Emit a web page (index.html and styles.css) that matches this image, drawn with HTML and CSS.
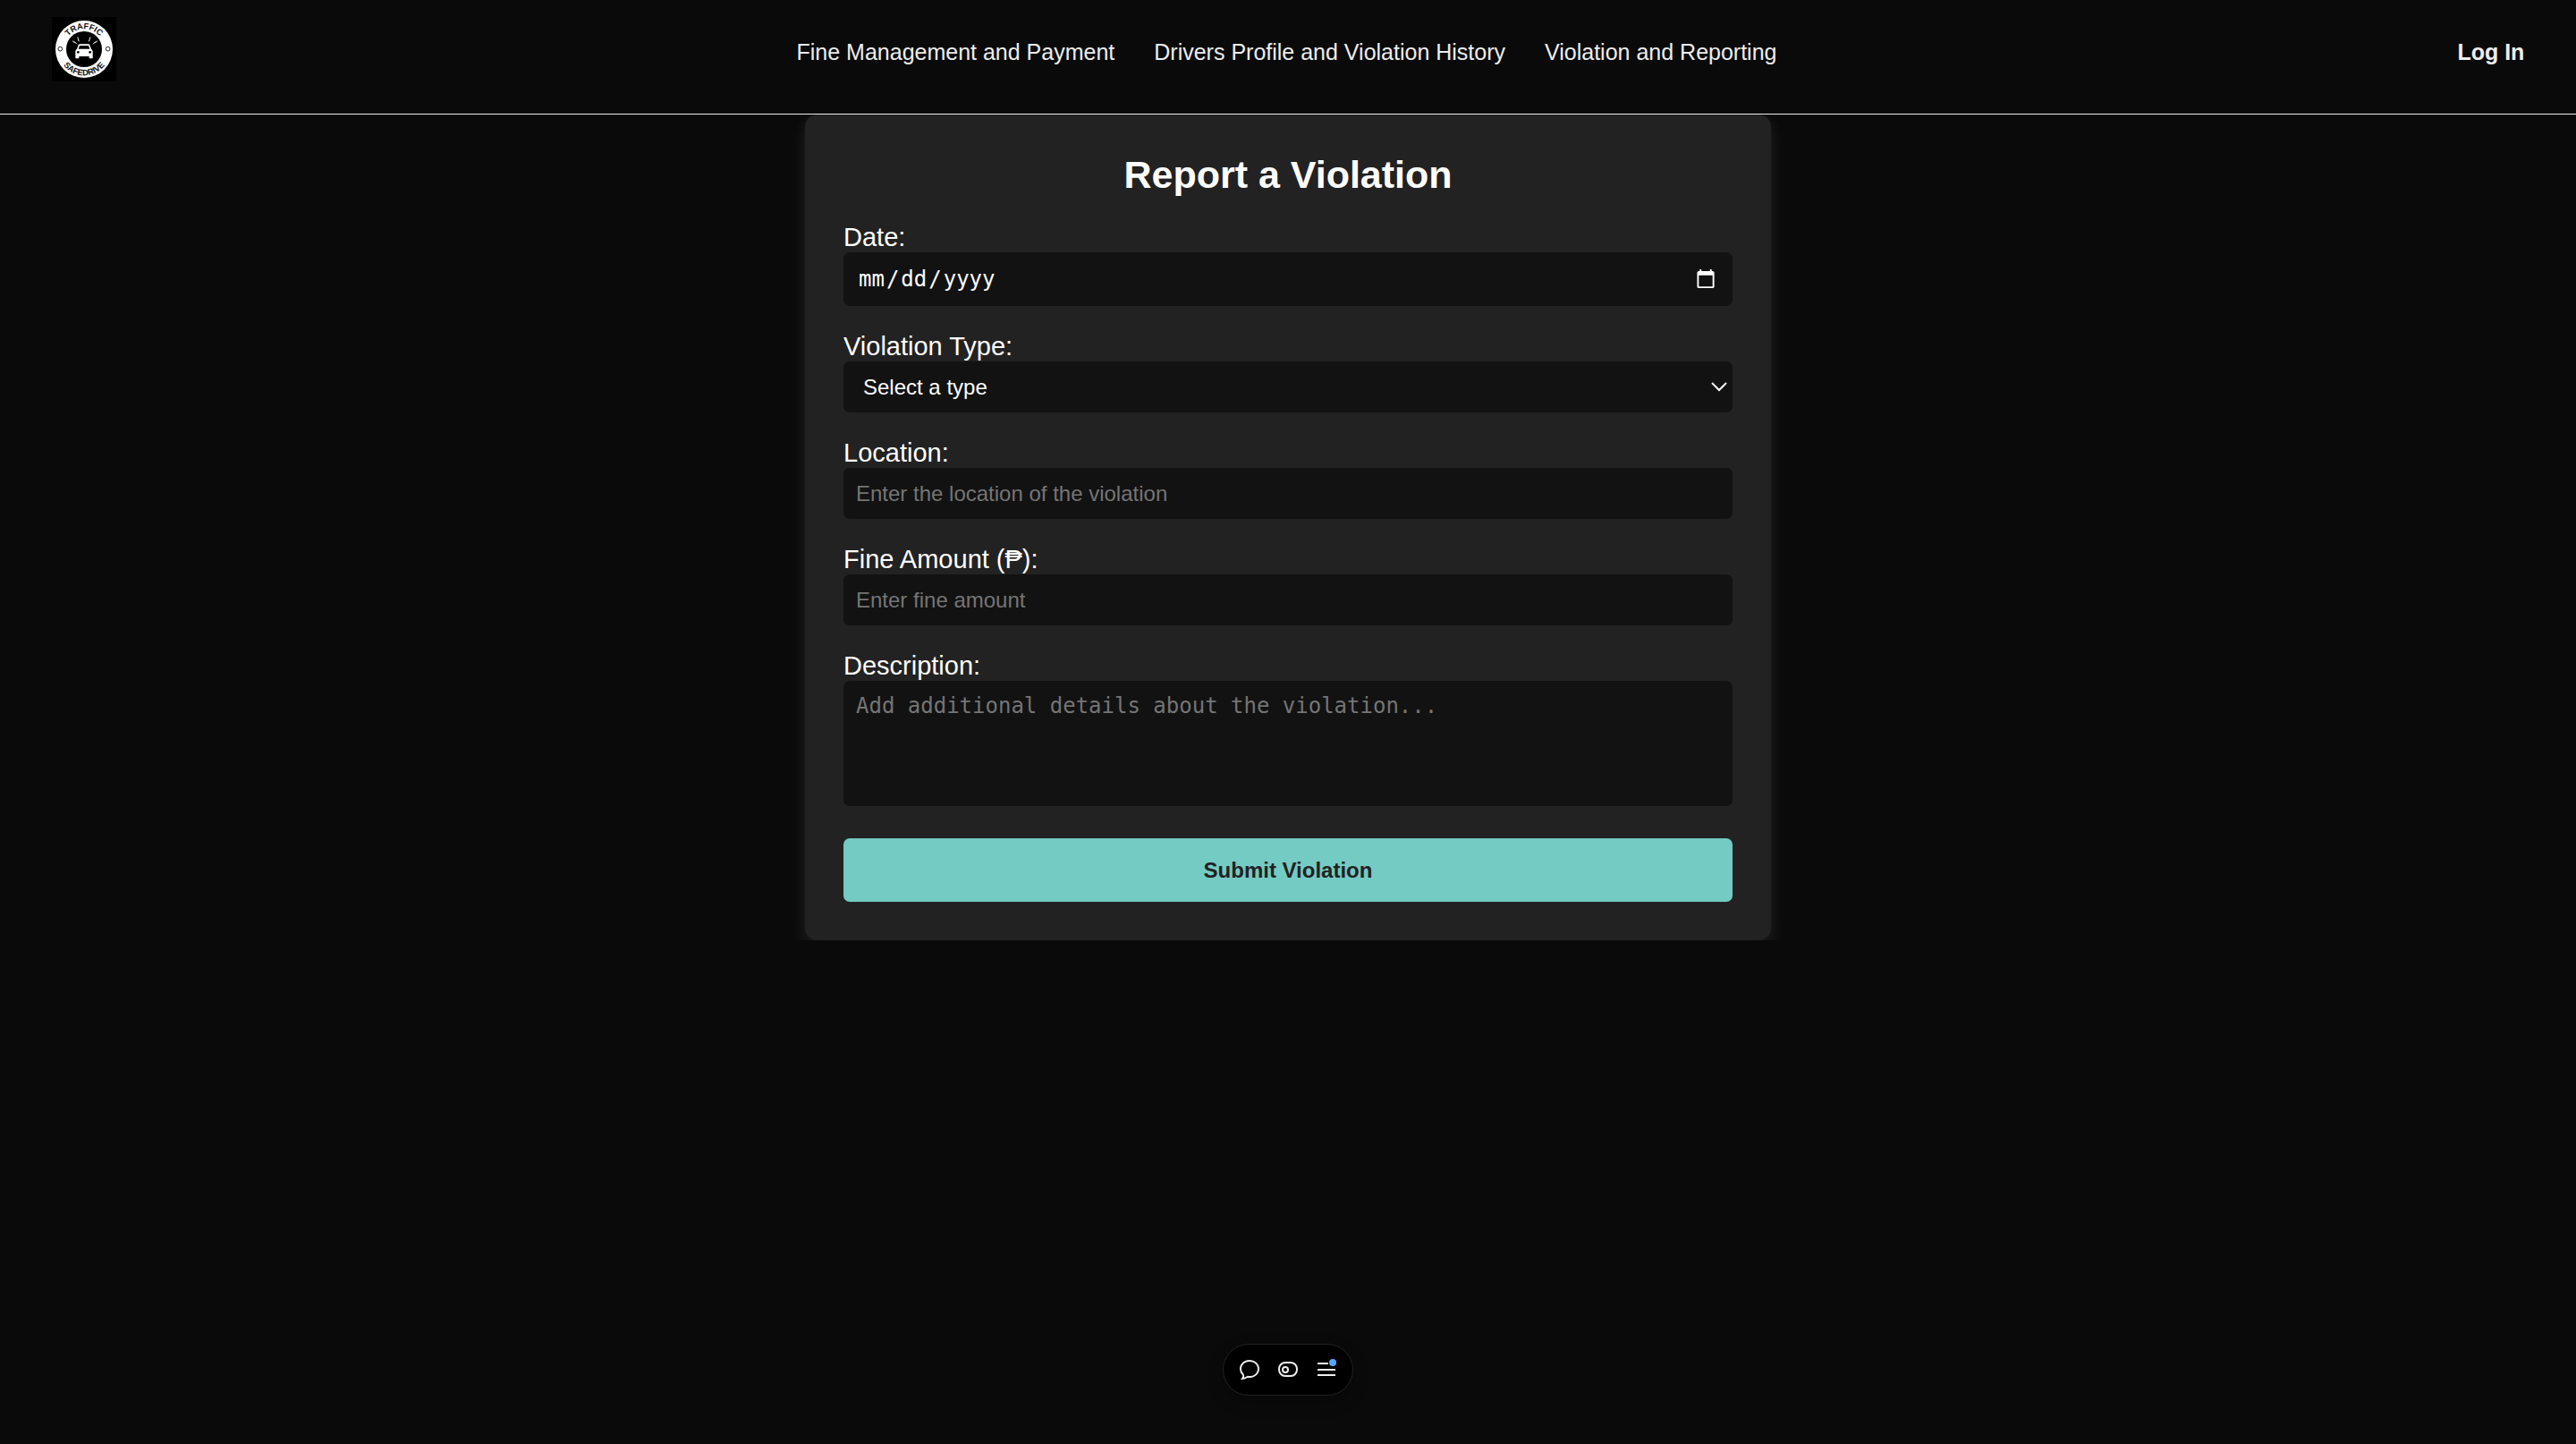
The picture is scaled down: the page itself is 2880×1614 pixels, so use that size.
FILE: index.html
```html
<!DOCTYPE html>
<html lang="en">
<head>
<meta charset="utf-8">
<meta name="viewport" content="width=device-width, initial-scale=1">
<title>Report a Violation</title>
<link rel="stylesheet" href="styles.css">
</head>
<body>
<header class="header">
  <a class="logo" href="#" aria-label="Traffic SafeDrive home">
    <svg viewBox="0 0 216 216" aria-hidden="true">
      <defs>
        <path id="arc-top" d="M40 108 A68 68 0 0 1 176 108"/>
        <path id="arc-bottom" d="M20 108 A88 88 0 0 0 196 108"/>
      </defs>
      <rect width="216" height="216" fill="#000"/>
      <circle cx="108" cy="108" r="96" fill="#fff"/>
      <circle cx="108" cy="108" r="60" fill="#000"/>
      <g class="logo-text">
        <text><textPath href="#arc-top" startOffset="50%">TRAFFIC</textPath></text>
        <text><textPath href="#arc-bottom" startOffset="50%">SAFEDRIVE</textPath></text>
      </g>
      <g fill="none" stroke="#222" stroke-width="3">
        <circle cx="28" cy="107" r="7"/>
        <circle cx="188" cy="107" r="7"/>
      </g>
      <path fill="#fff" d="M89 94 Q90 91 94 91 H122 Q126 91 127 94 L132 107 Q137 110 137 115 V139 H125 V132 H91 V139 H79 V115 Q79 110 84 107 Z"/>
      <path fill="#000" d="M93 96 H123 L127 107 H89 Z"/>
      <circle cx="88" cy="118" r="4" fill="#000"/>
      <circle cx="128" cy="118" r="4" fill="#000"/>
      <path fill="none" stroke="#fff" stroke-width="3" d="M69 80 l7 6 v-3 l8 8 M86 67 l3 7 l-1 1 l3 7 M129 67 l-3 7 l1 1 l-3 7 M153 80 l-7 6 v-3 l-8 8"/>
    </svg>
  </a>
  <nav class="nav">
    <a href="#">Fine Management and Payment</a>
    <a href="#">Drivers Profile and Violation History</a>
    <a href="#">Violation and Reporting</a>
  </nav>
  <a class="login" href="#">Log In</a>
</header>

<main class="main">
  <form class="card">
    <h1 class="title">Report a Violation</h1>
    <div class="field">
      <label for="date">Date:</label>
      <input class="control control-date" id="date" type="date">
    </div>
    <div class="field">
      <label for="type">Violation Type:</label>
      <div class="select">
        <select class="control control-select" id="type"><option>Select a type</option></select>
        <svg class="chevron" viewBox="0 0 18 11" aria-hidden="true"><path d="M1 1 L9 9 L17 1"/></svg>
      </div>
    </div>
    <div class="field">
      <label for="location">Location:</label>
      <input class="control" id="location" type="text" placeholder="Enter the location of the violation">
    </div>
    <div class="field">
      <label for="amount">Fine Amount (₱):</label>
      <input class="control" id="amount" type="number" placeholder="Enter fine amount">
    </div>
    <div class="field">
      <label for="description">Description:</label>
      <textarea class="control control-area" id="description" placeholder="Add additional details about the violation..."></textarea>
    </div>
    <button class="submit" type="submit">Submit Violation</button>
  </form>
</main>

<div class="toolbar" role="toolbar" aria-label="Page tools">
  <button type="button" aria-label="Comment">
    <svg viewBox="0 0 24 24"><path d="M4 22 Q6 19.500 4.500 17 A10 9 0 1 1 13 20 Q11 20 10 19.800 Q7 22 4 22 Z"/></svg>
  </button>
  <button type="button" aria-label="Flags">
    <svg viewBox="0 0 24 24"><rect x="2" y="4" width="20" height="15" rx="7"/><circle cx="9" cy="12" r="3"/></svg>
  </button>
  <button type="button" aria-label="Menu">
    <svg viewBox="0 0 24 24"><path d="M2 5 H14 M2 12 H22 M2 18 H22"/><circle class="dot" cx="19" cy="4" r="4"/></svg>
  </button>
</div>
</body>
</html>
```
FILE: styles.css
```css
* {
  box-sizing: border-box;
}

body {
  margin: 0;
  min-height: 100vh;
  background: #0a0a0a;
  color: #ededed;
  font-family: "Liberation Sans", Arial, sans-serif;
  color-scheme: dark;
}

.header {
  display: flex;
  justify-content: space-between;
  align-items: center;
  padding: 19px 2% 36px;
  border-bottom: 1px solid #ededed;
}

.header a {
  color: inherit;
  text-decoration: none;
}

.logo svg {
  display: block;
  width: 72px;
  height: 72px;
}

.logo-text {
  fill: #111;
  font-size: 28px;
  font-weight: 700;
  text-anchor: middle;
}

.nav {
  display: flex;
  gap: 44px;
}

.nav,
.login {
  padding-top: 6px;
  font-size: 25px;
  line-height: 29px;
}

.login {
  font-weight: 700;
}

.main {
  padding: 0 24px;
  overflow: hidden;
}

.card {
  display: flex;
  flex-direction: column;
  gap: 29px;
  max-width: 1080px;
  margin: 0 auto;
  padding: 43px;
  border-radius: 14px;
  background: #222;
  color: #fff;
  box-shadow: 0 7px 18px rgba(255, 255, 255, 0.1);
}

.title {
  margin: 0;
  font-size: 43px;
  line-height: 49px;
  text-align: center;
}

.field {
  display: flex;
  flex-direction: column;
  font-size: 29px;
  line-height: 33px;
}

.control {
  display: block;
  width: 100%;
  height: 57px;
  margin: 0;
  padding: 0 14px;
  border: 0;
  border-radius: 7px;
  background: #121212;
  color: #fff;
  font-family: "Liberation Sans", Arial, sans-serif;
  font-size: 24px;
}

.control::placeholder {
  color: #757575;
}

.control-date {
  height: 60px;
  padding: 0 16px;
  font-family: "DejaVu Sans Mono", monospace;
}

.control-date::-webkit-datetime-edit-text {
  padding: 0 1px;
}

.control-area {
  height: 140px;
  padding: 14px;
  font-family: "DejaVu Sans Mono", monospace;
  line-height: 28px;
  resize: none;
}

.select {
  display: grid;
  align-items: center;
}

.select > * {
  grid-area: 1 / 1;
}

.control-select {
  appearance: none;
  padding: 0 22px;
}

.chevron {
  justify-self: end;
  width: 18px;
  height: 11px;
  margin-right: 6px;
  fill: none;
  stroke: #fff;
  stroke-width: 2;
  pointer-events: none;
}

.submit {
  height: 71px;
  margin-top: 7px;
  border: 0;
  border-radius: 7px;
  background: #74cbc3;
  color: #222;
  font-family: inherit;
  font-size: 24px;
  font-weight: 700;
}

.toolbar {
  position: fixed;
  bottom: 54px;
  left: 50%;
  display: flex;
  gap: 19px;
  padding: 16px 17px;
  border: 1px solid #222;
  border-radius: 30px;
  background: #000;
  box-shadow: 0 7px 18px rgba(0, 0, 0, 0.3);
  transform: translateX(-50%);
}

.toolbar button {
  padding: 0;
  border: 0;
  background: none;
}

.toolbar svg {
  display: block;
  width: 24px;
  height: 24px;
  fill: none;
  stroke: #ededed;
  stroke-width: 2;
}

.toolbar .dot {
  fill: #52a8ff;
  stroke: none;
}
```
